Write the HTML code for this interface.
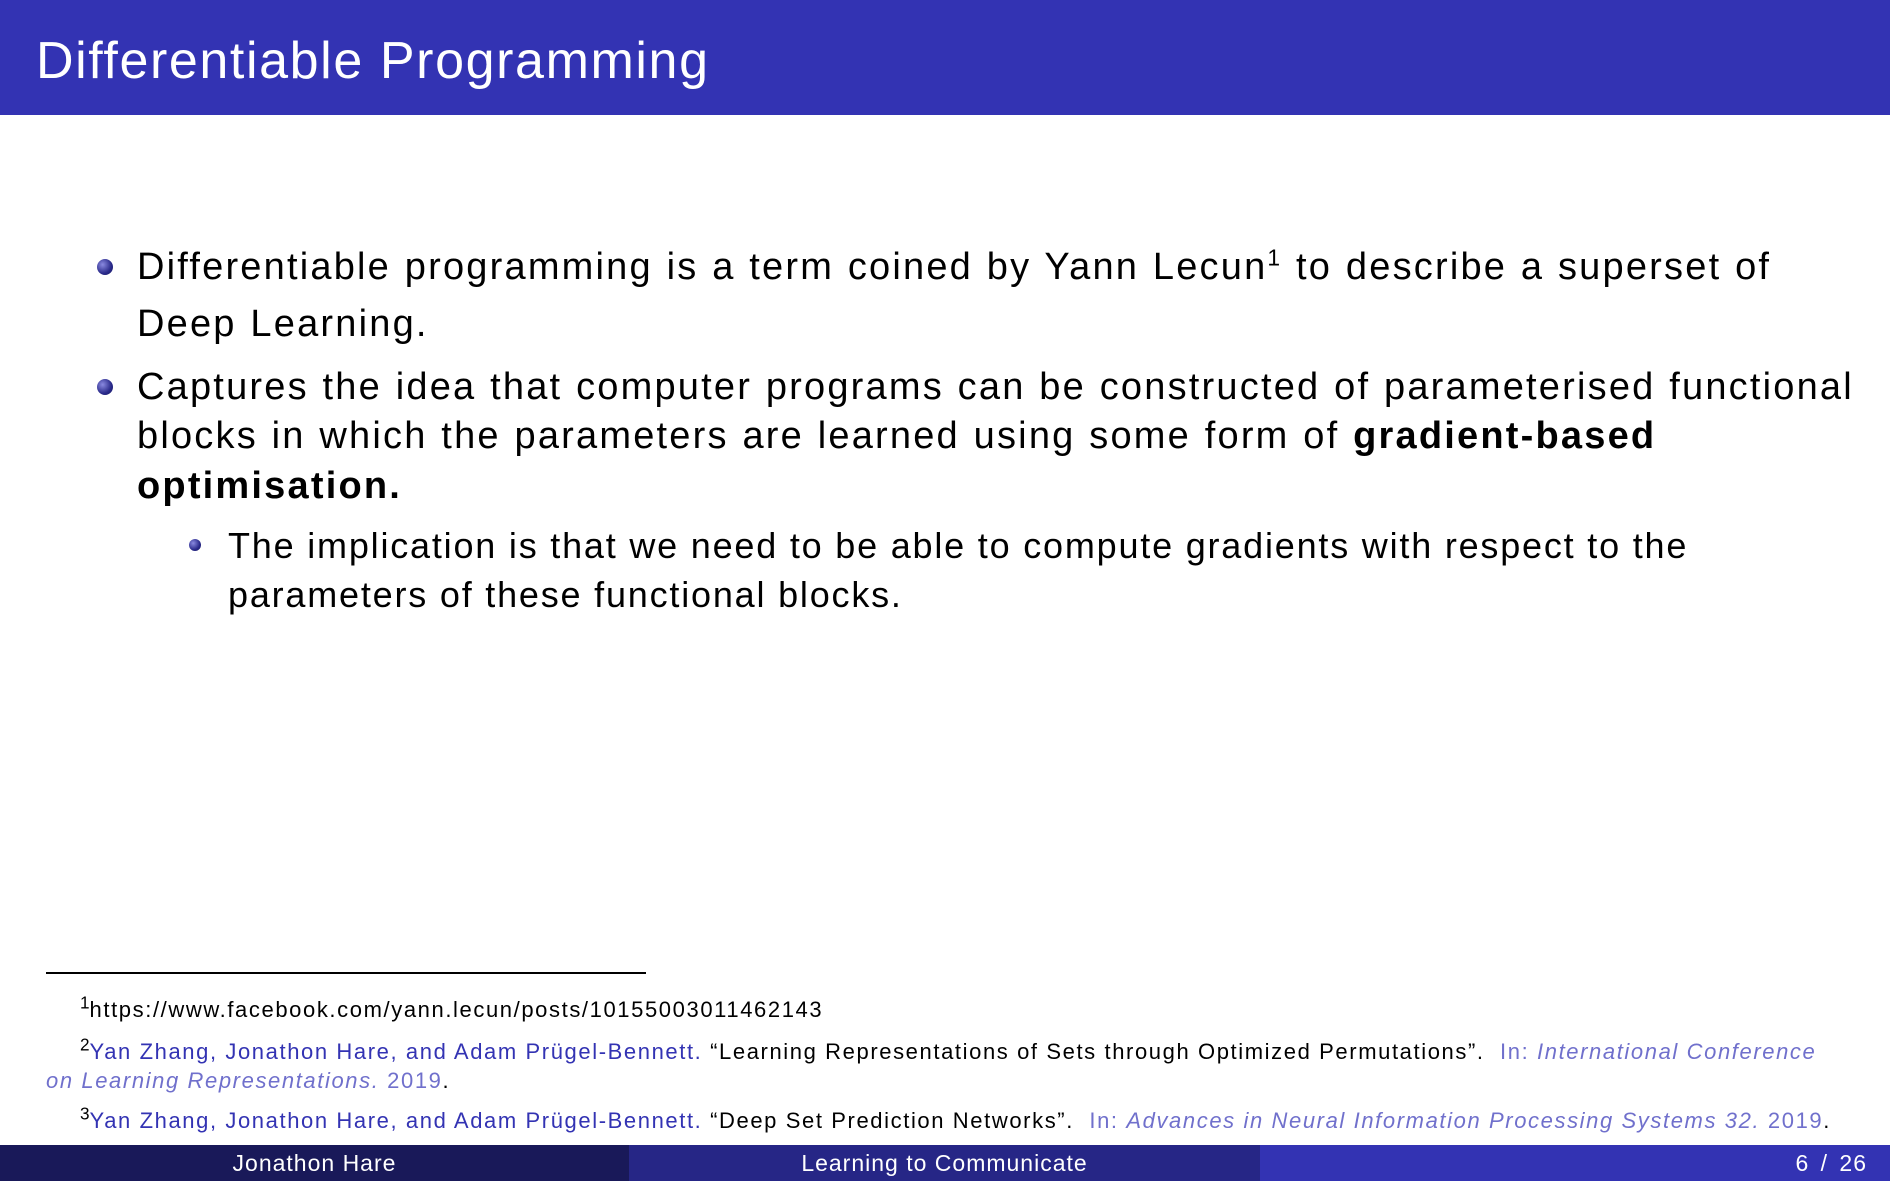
<!DOCTYPE html>
<html><head><meta charset="utf-8"><style>
body{margin:0;width:1890px;height:1181px;position:relative;overflow:hidden;background:#fff;font-family:"Liberation Sans",sans-serif;color:#000}
.a{position:absolute;white-space:nowrap}
.hdr{position:absolute;left:0;top:0;width:1890px;height:115px;background:#3333b3}
.t{font-size:52px;color:#fff;left:36px;top:31px;letter-spacing:1.6px}
.m{font-size:38px;left:137px;letter-spacing:2.2px;word-spacing:1px}
.s{font-size:36px;left:228px;letter-spacing:1.8px}
.dot{position:absolute;border-radius:50%;background:radial-gradient(circle at 35% 35%,#8a8ae0,#2a2a8a 60%,#151560)}
.f{font-size:22px;letter-spacing:1.6px}
.b{color:#3333b3}
.l{color:#7070cc;font-style:italic}
.ft{position:absolute;top:1145px;height:36px;font-size:23px;color:#fff;line-height:36px;letter-spacing:1px}
sup{font-size:60%;line-height:0}
.f sup{font-size:78%;letter-spacing:0}
</style></head><body>
<div class="hdr"></div>
<div class="a t">Differentiable Programming</div>

<div class="dot" style="left:97px;top:259px;width:16px;height:16px"></div>
<div class="a m" style="top:246px">Differentiable programming is a term coined by Yann Lecun<sup>1</sup> to describe a superset of</div>
<div class="a m" style="top:303px">Deep Learning.</div>

<div class="dot" style="left:97px;top:379px;width:16px;height:16px"></div>
<div class="a m" style="top:366px">Captures the idea that computer programs can be constructed of parameterised functional</div>
<div class="a m" style="top:415px">blocks in which the parameters are learned using some form of <b>gradient-based</b></div>
<div class="a m" style="top:465px"><b>optimisation.</b></div>

<div class="dot" style="left:189px;top:539px;width:12px;height:12px"></div>
<div class="a s" style="top:525px">The implication is that we need to be able to compute gradients with respect to the</div>
<div class="a s" style="top:574px">parameters of these functional blocks.</div>

<div style="position:absolute;left:46px;top:972px;width:600px;height:2px;background:#000"></div>
<div class="a f" style="left:80px;top:997px"><sup>1</sup>https://www.facebook.com/yann.lecun/posts/10155003011462143</div>
<div class="a f" style="left:80px;top:1039px"><sup>2</sup><span class="b">Yan Zhang, Jonathon Hare, and Adam Prügel-Bennett.</span> “Learning Representations of Sets through Optimized Permutations”. &nbsp;<span class="l" style="font-style:normal">In:</span> <span class="l">International Conference</span></div>
<div class="a f" style="left:46px;top:1068px"><span class="l">on Learning Representations.</span> <span class="l" style="font-style:normal">2019</span>.</div>
<div class="a f" style="left:80px;top:1108px"><sup>3</sup><span class="b">Yan Zhang, Jonathon Hare, and Adam Prügel-Bennett.</span> “Deep Set Prediction Networks”. &nbsp;<span class="l" style="font-style:normal">In:</span> <span class="l">Advances in Neural Information Processing Systems 32.</span> <span class="l" style="font-style:normal">2019</span>.</div>

<div class="ft" style="left:0;width:629px;background:#191959;text-align:center">Jonathon Hare</div>
<div class="ft" style="left:629px;width:631px;background:#262686;text-align:center">Learning to Communicate</div>
<div class="ft" style="left:1260px;width:630px;background:#3333b3;text-align:right"><span style="padding-right:23px;word-spacing:4px">6 / 26</span></div>
</body></html>
